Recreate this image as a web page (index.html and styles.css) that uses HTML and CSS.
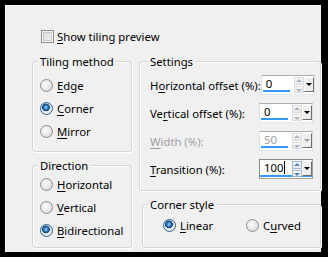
FILE: index.html
```html
<!DOCTYPE html>
<html lang="en">
<head>
  <meta charset="UTF-8">
  <title>Tiling settings</title>
  <link rel="stylesheet" href="styles.css">
</head>
<body>
  <div class="dialog">
    <!-- Vista previa -->
    <label class="check-row">
      <span class="checkbox"></span>
      <span><u>S</u>how tiling preview</span>
    </label>

    <div class="columns">
      <div class="col-left">
        <!-- Metodo -->
        <div class="group group-tiling">
          <div class="group-title">Tiling method</div>
          <div class="radio-list list-tiling">
            <label class="radio-row"><span class="radio"></span><span><u>E</u>dge</span></label>
            <label class="radio-row"><span class="radio on"></span><span><u>C</u>orner</span></label>
            <label class="radio-row"><span class="radio"></span><span><u>M</u>irror</span></label>
          </div>
        </div>

        <!-- Direccion -->
        <div class="group group-direction">
          <div class="group-title">Direction</div>
          <div class="radio-list">
            <label class="radio-row"><span class="radio"></span><span><u>H</u>orizontal</span></label>
            <label class="radio-row"><span class="radio"></span><span><u>V</u>ertical</span></label>
            <label class="radio-row"><span class="radio on"></span><span><u>B</u>idirectional</span></label>
          </div>
        </div>
      </div>

      <div class="col-right">
        <!-- Ajustes -->
        <div class="group group-settings">
          <div class="group-title title-settings">Settings</div>
          <div class="fields">
            <div class="field-row">
              <span class="field-label">H<u>o</u>rizontal offset (%):</span>
              <div class="spin">
                <span class="spin-value">0</span>
                <span class="spin-arrows"><i class="up"></i><i class="down"></i></span>
                <span class="spin-drop"></span>
              </div>
            </div>
            <div class="field-row">
              <span class="field-label">Ve<u>r</u>tical offset (%):</span>
              <div class="spin">
                <span class="spin-value">0</span>
                <span class="spin-arrows"><i class="up"></i><i class="down"></i></span>
                <span class="spin-drop"></span>
              </div>
            </div>
            <div class="field-row disabled">
              <span class="field-label"><u>W</u>idth (%):</span>
              <div class="spin">
                <span class="spin-value">50</span>
                <span class="spin-arrows"><i class="up"></i><i class="down"></i></span>
                <span class="spin-drop"></span>
              </div>
            </div>
            <div class="field-row">
              <span class="field-label"><u>T</u>ransition (%):</span>
              <div class="spin focus">
                <span class="spin-value">100<span class="caret"></span></span>
                <span class="spin-arrows"><i class="up"></i><i class="down"></i></span>
                <span class="spin-drop"></span>
              </div>
            </div>
          </div>
        </div>

        <!-- Estilo de esquina -->
        <div class="group group-corner">
          <div class="group-title">Corner style</div>
          <div class="corner-options">
            <label class="radio-row option-linear"><span class="radio on"></span><span><u>L</u>inear</span></label>
            <label class="radio-row"><span class="radio"></span><span>C<u>u</u>rved</span></label>
          </div>
        </div>
      </div>
    </div>
  </div>
</body>
</html>
```

FILE: styles.css
```css
body {
  margin: 0;
  background-color: #000;
  font-family: "Noto Sans", sans-serif;
  font-size: 11.3px;
  color: #000;
}
u {
  text-underline-offset: 2px;
}
.dialog {
  margin: 5px 7px 5px 5px;
  height: 247px;
  box-sizing: border-box;
  padding-top: 23px;
  background-color: #f0f0f0;
  box-shadow: inset 1px 1px 0 #fafafa;
}
.check-row {
  display: flex;
  align-items: center;
  gap: 3px;
  height: 16px;
  margin-left: 36px;
  line-height: 15px;
}
.checkbox {
  width: 13px;
  height: 13px;
  box-sizing: border-box;
  border: 1px solid #8e8f8f;
  background: linear-gradient(135deg, #d6d6d6, #f7f7f7);
  box-shadow: inset 0 0 0 1px #f4f4f4, inset 0 0 0 2px #c9c9c9;
}
.columns {
  display: flex;
  margin: 17px 0 0 27px;
}
.col-left {
  width: 100px;
}
.col-right {
  width: 182px;
  margin-left: 7px;
}
.group {
  box-sizing: border-box;
  border: 1px solid #d5d5d5;
  border-radius: 3px;
  box-shadow: inset 1px 1px 0 #fff, 1px 1px 0 #fff;
}
.group-title {
  width: max-content;
  margin: -8px 0 0 5px;
  padding: 0 2px;
  background-color: #f0f0f0;
  line-height: 15px;
}
.title-settings {
  margin-left: -2px;
}
.group-tiling {
  height: 91px;
}
.group-direction {
  height: 83px;
  margin-top: 13px;
}
.radio-list {
  padding-left: 7px;
}
.list-tiling {
  padding-top: 5px;
}
.radio-row {
  display: flex;
  align-items: center;
  gap: 4px;
  height: 23px;
  line-height: 15px;
}
.radio {
  flex: none;
  width: 13px;
  height: 13px;
  box-sizing: border-box;
  border: 1px solid #8f8f8f;
  border-radius: 50%;
  background: radial-gradient(circle at 40% 40%, #fbfbfb 0, #e6e6e6 55%, #cdcdcd 100%);
}
.radio.on {
  border-color: #2c628b;
  background: radial-gradient(circle at 45% 40%, #9fd8ff 0, #3a8fd8 1.6px, #1c5a96 3px, #153f66 3.6px, #e2e8ee 4.2px, #f6f6f6 100%);
}
.group-settings {
  height: 130px;
  padding: 0 7px 0 10px;
}
.fields {
  padding-top: 2px;
}
.field-row {
  display: flex;
  align-items: center;
  justify-content: space-between;
  height: 28px;
}
.field-label {
  white-space: nowrap;
}
.field-row.disabled {
  color: #a0a0a0;
}
.spin {
  display: flex;
  width: 54px;
  height: 20px;
  box-sizing: border-box;
  border: 1px solid #abadb3;
  border-color: #abadb3 #dbdfe6 #e3e9ef #e2e3ea;
  background-color: #fff;
}
.spin-value {
  width: 24px;
  height: 14px;
  margin: 0 4px 0 1px;
  padding-left: 3px;
  border-bottom: 2px solid #3399ff;
  line-height: 15px;
}
.spin.focus {
  border-color: #8a8a8a #a0a0a0 #a0a0a0 #8a8a8a;
  box-shadow: inset 0 -1px 0 #fff, inset 0 -3px 0 #3399ff;
}
.spin.focus .spin-value {
  border-bottom-color: transparent;
}
.caret {
  display: inline-block;
  width: 1px;
  height: 13px;
  margin-left: 1px;
  vertical-align: -2px;
  background-color: #000;
}
.spin-arrows {
  display: flex;
  flex-direction: column;
  width: 10px;
  padding-top: 1px;
}
.spin-arrows i {
  position: relative;
  display: block;
  height: 6px;
  margin-bottom: 1px;
  border: 1px solid #dadada;
  background: linear-gradient(#fafafa, #e8e8e8);
}
.spin-arrows i::after {
  content: "";
  position: absolute;
  left: 1px;
  border-left: 3px solid transparent;
  border-right: 3px solid transparent;
}
.spin-arrows .up::after {
  top: 1px;
  border-bottom: 3px solid #a9b6c6;
}
.spin-arrows .down::after {
  top: 2px;
  border-top: 3px solid #a9b6c6;
}
.spin.focus .spin-arrows i {
  border-color: #9ab4d0;
}
.spin.focus .spin-arrows .up::after {
  border-bottom-color: #4f86c6;
}
.spin.focus .spin-arrows .down::after {
  border-top-color: #4f86c6;
}
.spin-drop {
  position: relative;
  width: 10px;
  height: 15px;
  margin-top: 1px;
  box-sizing: border-box;
  border: 1px solid;
  border-color: #fff #6d6d6d #6d6d6d #fff;
  background-color: #ededed;
}
.spin-drop::after {
  content: "";
  position: absolute;
  top: 5px;
  left: 1px;
  border-left: 3px solid transparent;
  border-right: 3px solid transparent;
  border-top: 3px solid #000;
}
.field-row.disabled .spin-drop::after {
  border-top-color: #a0a0a0;
}
.group-corner {
  height: 44px;
  margin: 13px 0 0 3px;
}
.corner-options {
  display: flex;
  padding: 2px 0 0 20px;
}
.option-linear {
  width: 83px;
}
```
